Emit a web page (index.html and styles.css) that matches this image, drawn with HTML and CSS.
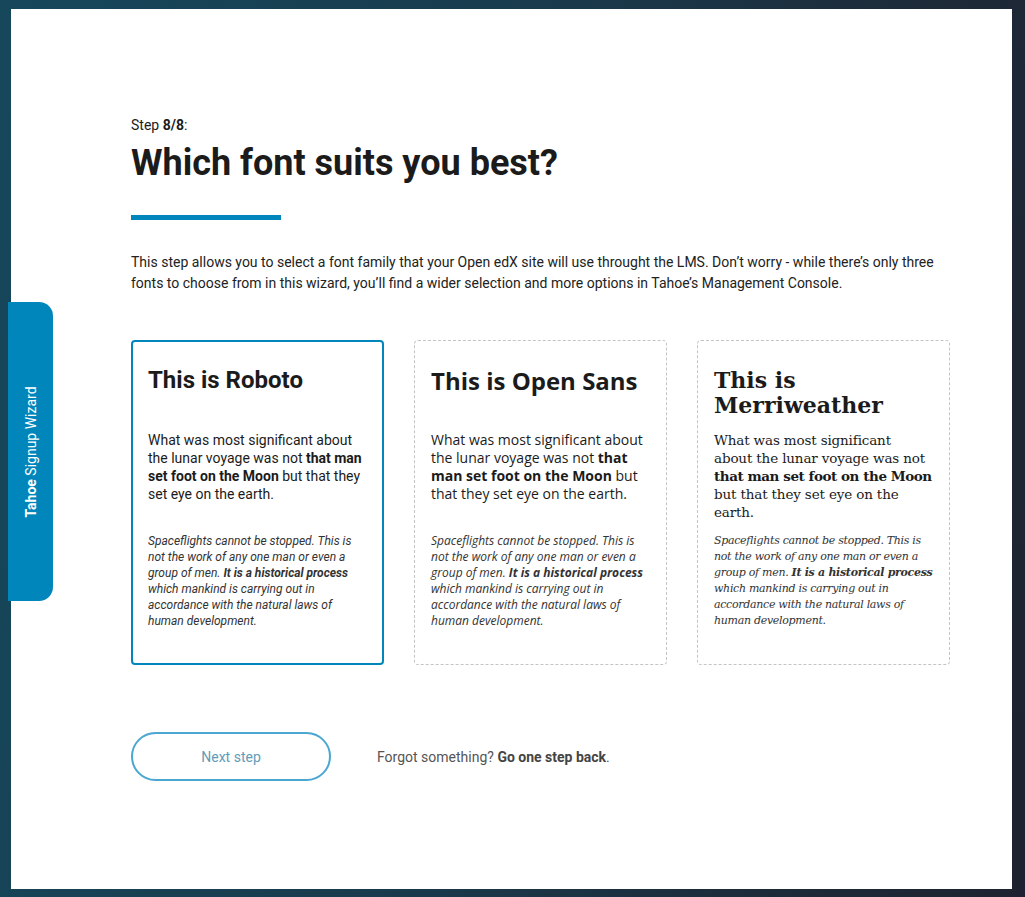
FILE: index.html
```html
<!DOCTYPE html>
<html lang="en">
<head>
<meta charset="utf-8">
<title>Tahoe Signup Wizard</title>
<link rel="stylesheet" href="styles.css">
</head>
<body>
<div class="frame">
  <div class="panel">
    <div class="tab"><span class="tab-label"><b>Tahoe</b> Signup Wizard</span></div>
    <main class="content">
      <p class="step">Step <b>8/8</b>:</p>
      <h1 class="title">Which font suits you best?</h1>
      <div class="bar"></div>
      <p class="intro">This step allows you to select a font family that your Open edX site will use throught the LMS. Don’t worry - while there’s only three fonts to choose from in this wizard, you’ll find a wider selection and more options in Tahoe’s Management Console.</p>
      <div class="cards">
        <div class="card card-selected font-roboto">
          <h2 class="card-title">This is Roboto</h2>
          <p class="card-body">What was most significant about the lunar voyage was not <b>that man set foot on the Moon</b> but that they set eye on the earth.</p>
          <p class="card-quote">Spaceflights cannot be stopped. This is not the work of any one man or even a group of men. <b>It is a historical process</b> which mankind is carrying out in accordance with the natural laws of human development.</p>
        </div>
        <div class="card font-opensans">
          <h2 class="card-title">This is Open Sans</h2>
          <p class="card-body">What was most significant about the lunar voyage was not <b>that man set foot on the Moon</b> but that they set eye on the earth.</p>
          <p class="card-quote">Spaceflights cannot be stopped. This is not the work of any one man or even a group of men. <b>It is a historical process</b> which mankind is carrying out in accordance with the natural laws of human development.</p>
        </div>
        <div class="card font-serif">
          <h2 class="card-title">This is Merriweather</h2>
          <p class="card-body">What was most significant about the lunar voyage was not <b>that man set foot on the Moon</b> but that they set eye on the earth.</p>
          <p class="card-quote">Spaceflights cannot be stopped. This is not the work of any one man or even a group of men. <b>It is a historical process</b> which mankind is carrying out in accordance with the natural laws of human development.</p>
        </div>
      </div>
      <div class="actions">
        <button class="next-btn" type="button">Next step</button>
        <p class="back">Forgot something? <b>Go one step back</b>.</p>
      </div>
    </main>
  </div>
</div>
</body>
</html>
```
FILE: styles.css
```css
* { box-sizing: border-box; }
html, body { margin: 0; padding: 0; }
body {
  width: 1025px;
  height: 897px;
  overflow: hidden;
  background: linear-gradient(100deg, #16475b 0%, #193b4d 45%, #1d2a38 80%, #1e2230 100%);
  font-family: Roboto, "Liberation Sans", sans-serif;
  color: #1b1b1b;
}
.frame {
  padding: 9px 13px 8px 11px;
  height: 897px;
}
.panel {
  position: relative;
  background: #ffffff;
  height: 880px;
  padding: 106px 0 0 120px;
}
.tab {
  position: absolute;
  left: -3px;
  top: 293px;
  width: 45px;
  height: 299px;
  background: #0086ba;
  border-radius: 0 14px 14px 0;
  display: flex;
  align-items: center;
  justify-content: center;
}
.tab-label {
  transform: rotate(-90deg);
  white-space: nowrap;
  color: #ffffff;
  font-size: 14px;
  line-height: 16px;
}
.content { width: 819px; }
.step {
  margin: 0;
  font-size: 14px;
  line-height: 20px;
  color: #1b1b1b;
}
.title {
  margin: 7px 0 0;
  font-size: 36px;
  line-height: 42px;
  font-weight: 700;
  color: #1b1b1b;
}
.bar {
  width: 150px;
  height: 5px;
  background: #0086ba;
  margin-top: 31px;
}
.intro {
  margin: 32px 0 0;
  font-size: 14px;
  line-height: 21px;
  color: #222;
}
.cards {
  margin-top: 46px;
  display: grid;
  grid-template-columns: repeat(3, 253px);
  column-gap: 30px;
}
.card {
  height: 325px;
  border: 1px dashed #c4c4c4;
  border-radius: 4px;
  padding: 27px 16px 0 16px;
  display: flex;
  flex-direction: column;
}
.card-selected {
  border: 2px solid #0086ba;
  padding: 26px 15px 0 15px;
}
.card-title {
  margin: 0 0 13px;
  min-height: 50px;
  font-size: 24px;
  line-height: 25px;
  font-weight: 700;
  color: #1b1b1b;
}
.card-body {
  margin: 0 0 12px;
  min-height: 90px;
  font-size: 14px;
  line-height: 18px;
  color: #1b1b1b;
}
.card-quote {
  margin: 0;
  font-size: 12px;
  line-height: 16px;
  font-style: italic;
  color: #333;
}
.font-roboto { font-family: Roboto, sans-serif; }
.font-opensans { font-family: "Open Sans", sans-serif; }
.font-serif { font-family: "DejaVu Serif", "Liberation Serif", serif; }
.font-serif .card-title { font-size: 22px; line-height: 25px; }
.font-serif .card-body { font-size: 13.5px; letter-spacing: -0.15px; }
.font-serif .card-body b { letter-spacing: -0.45px; }
.font-serif .card-quote { font-size: 11px; letter-spacing: -0.3px; }
.actions {
  margin-top: 67px;
  display: flex;
  align-items: center;
  gap: 46px;
}
.next-btn {
  width: 200px;
  height: 49px;
  border: 2px solid #4aa7d1;
  border-radius: 25px;
  background: #ffffff;
  color: #5f9cb9;
  font-family: Roboto, sans-serif;
  font-size: 14px;
  padding: 0;
}
.back {
  margin: 0;
  font-size: 14px;
  color: #555;
}
.back b { color: #444; }
```
